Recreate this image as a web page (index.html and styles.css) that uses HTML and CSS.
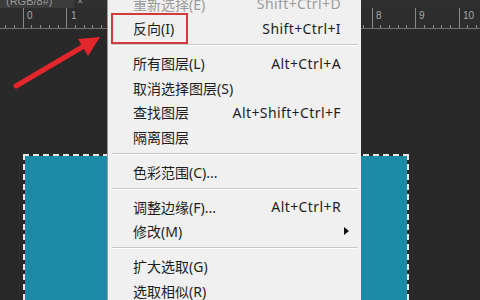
FILE: index.html
```html
<!DOCTYPE html>
<html lang="zh">
<head>
    <meta charset="UTF-8">
    <title>选择菜单</title>
    <link rel="stylesheet" href="styles.css">
</head>
<body>
    <!-- Document tab + ruler -->
    <div class="tabbar">
        <div class="tab">(RGB/8#)</div>
        <div class="tab-close">×</div>
    </div>
    <svg class="ruler" width="480" height="21" viewBox="0 0 480 21">
        <g id="ticks" stroke="#8a8a8a" stroke-width="1"></g>
        <g fill="#a8a8a8" font-family="Liberation Sans, sans-serif" font-size="10">
            <text x="27" y="11">0</text>
            <text x="71" y="11">1</text>
            <text x="376" y="11">8</text>
            <text x="419" y="11">9</text>
            <text x="463" y="11">10</text>
        </g>
        <line x1="0" y1="20.5" x2="480" y2="20.5" stroke="#6e6e6e"></line>
    </svg>

    <!-- Canvas -->
    <div class="canvas">
        <div class="selection"></div>
    </div>

    <!-- Arrow annotation -->
    <svg class="arrow" width="110" height="100" viewBox="0 0 110 100">
        <line x1="16" y1="86" x2="84" y2="46" stroke="#e3262b" stroke-width="5" stroke-linecap="round"></line>
        <polygon points="100,37 78,39 88,56" fill="#e3262b"></polygon>
    </svg>

    <!-- Select menu -->
    <div class="menu">
        <div class="item disabled"><span>重新选择(E)</span><span class="key">Shift+Ctrl+D</span></div>
        <div class="item">
            <span class="mark"></span>
            <span>反向(I)</span><span class="key">Shift+Ctrl+I</span>
        </div>
        <div class="sep"></div>
        <div class="item"><span>所有图层(L)</span><span class="key">Alt+Ctrl+A</span></div>
        <div class="item"><span>取消选择图层(S)</span></div>
        <div class="item"><span>查找图层</span><span class="key">Alt+Shift+Ctrl+F</span></div>
        <div class="item"><span>隔离图层</span></div>
        <div class="sep"></div>
        <div class="item"><span>色彩范围(C)...</span></div>
        <div class="sep"></div>
        <div class="item"><span>调整边缘(F)...</span><span class="key">Alt+Ctrl+R</span></div>
        <div class="item"><span>修改(M)</span><span class="sub"></span></div>
        <div class="sep"></div>
        <div class="item"><span>扩大选取(G)</span></div>
        <div class="item"><span>选取相似(R)</span></div>
    </div>

    <script>
        // ruler ticks: one unit = 43.6px, five subdivisions
        const ticks = document.getElementById("ticks");
        const unit = 43.6, origin = 22.7;
        for (let i = -5; i < 60; i++) {
            const x = Math.round(origin + i * unit / 5) + 0.5;
            const line = document.createElementNS("http://www.w3.org/2000/svg", "line");
            line.setAttribute("x1", x);
            line.setAttribute("x2", x);
            line.setAttribute("y1", i % 5 === 0 ? 0 : 17);
            line.setAttribute("y2", 20);
            ticks.appendChild(line);
        }
    </script>
</body>
</html>
```

FILE: styles.css
```css
body {
    margin: 0;
    width: 480px;
    height: 300px;
    overflow: hidden;
    position: relative;
    background-color: #292929;
    font-family: "Noto Sans", "Noto Sans CJK SC", sans-serif;
}
.tabbar {
    display: flex;
    height: 8px;
    background-color: #2f2f2f;
    overflow: hidden;
}
.tab {
    width: 74px;
    background-color: #3c3c3c;
    color: #9a9a9a;
    font-family: "Liberation Sans", sans-serif;
    font-size: 11px;
    line-height: 2px;
    padding-left: 6px;
    box-sizing: border-box;
}
.tab-close {
    color: #8a8a8a;
    font-size: 11px;
    line-height: 2px;
    padding-left: 3px;
}
.ruler {
    display: block;
    background-color: #2d2d2d;
}
.canvas {
    height: 271px;
    padding: 125px 0 0 23px;
    box-sizing: border-box;
}
.selection {
    width: 382px;
    height: 144px;
    border: 2px dashed #e6e6e6;
    border-bottom: none;
    background-color: #1a8aa6;
    background-clip: padding-box;
}
.arrow {
    position: absolute;
    left: 0;
    top: 0;
}
.menu {
    position: absolute;
    left: 107px;
    top: -8.5px;
    bottom: 0;
    width: 254px;
    background-color: #f0f0f0;
    border-left: 1px solid #9a9a9a;
    box-sizing: border-box;
    overflow: hidden;
    font-size: 14px;
    color: #1e1e1e;
}
.item {
    position: relative;
    display: flex;
    justify-content: space-between;
    align-items: center;
    height: 24.5px;
    padding: 0 20px 0 25px;
}
.item.disabled {
    color: #9c9c9c;
}
.key {
    letter-spacing: 0.4px;
}
.sep {
    height: 1px;
    margin: 3.5px 4px 5px 4px;
    background-color: #c6c6c6;
    border-bottom: 1px solid #ffffff;
}
.sub {
    width: 0;
    height: 0;
    margin-right: -8px;
    border-top: 4px solid transparent;
    border-bottom: 4px solid transparent;
    border-left: 5px solid #111;
}
.mark {
    position: absolute;
    left: 3px;
    top: -3.5px;
    width: 77px;
    height: 31.5px;
    border: 2px solid #d23b3b;
    box-sizing: border-box;
}
```
